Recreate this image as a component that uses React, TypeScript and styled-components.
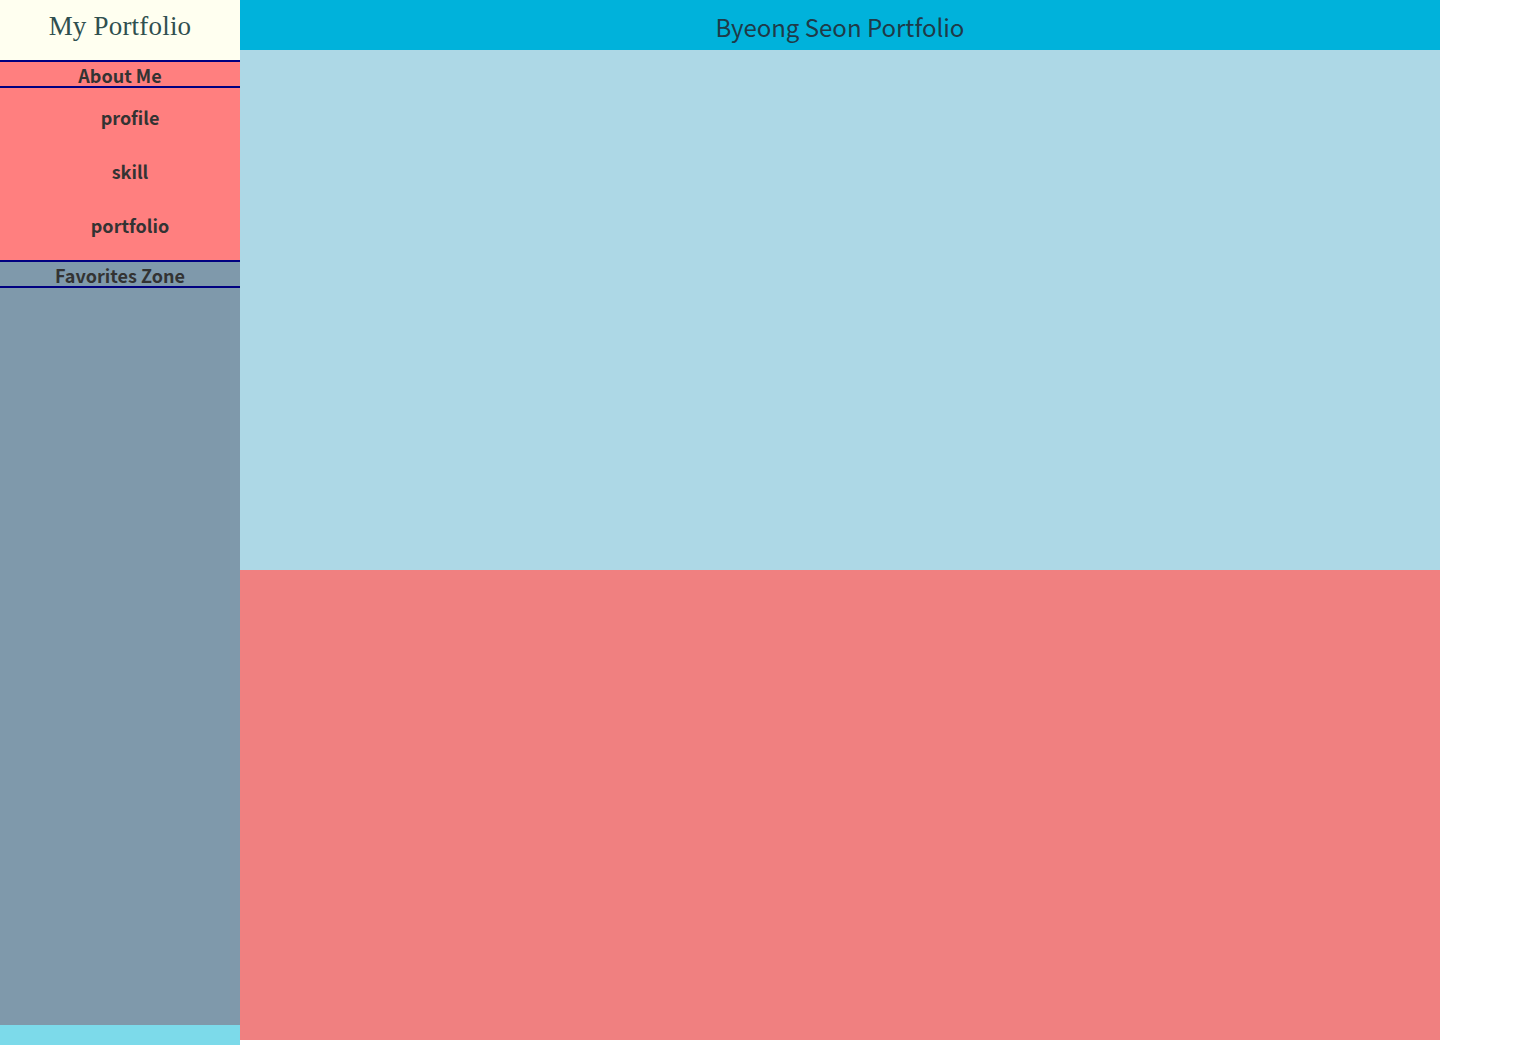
import React from 'react';
import styled, { createGlobalStyle } from 'styled-components';

const GlobalStyle = createGlobalStyle`
    html, body {
        margin: 0;
        padding: 0;
        background: #ffffff;
    }
    body {
        font-family: "Noto Sans CJK KR", "Noto Sans", sans-serif;
        color: #333333;
    }
`;

const Page = styled.div`
    display: flex;
    width: 1440px;
`;

const SideBar = styled.aside`
    width: 240px;
    flex-shrink: 0;
    display: flex;
    flex-direction: column;
`;

const Logo = styled.div`
    height: 60px;
    background-color: #fffff0;
    color: #2f4f4f;
    font-family: "Liberation Serif", "DejaVu Serif", serif;
    font-size: 27px;
    letter-spacing: 0.2px;
    display: flex;
    align-items: center;
    justify-content: center;
    padding-bottom: 7px;
    box-sizing: border-box;
`;

const SectionTitle = styled.h3<{ $bg: string }>`
    margin: 0;
    height: 28px;
    box-sizing: border-box;
    border-top: 2px solid #000080;
    border-bottom: 2px solid #000080;
    background-color: ${p => p.$bg};
    font-size: 18px;
    font-weight: bold;
    line-height: 26px;
    text-align: center;
    color: #333333;
`;

const MenuList = styled.ul`
    list-style: none;
    margin: 0;
    padding: 2px 0 8px 20px;
    background-color: #ff7f7f;
`;

const MenuItem = styled.li`
    height: 54px;
    line-height: 54px;
    text-align: center;
    font-size: 18px;
    font-weight: bold;
    color: #333333;
`;

const FavoriteZone = styled.div`
    height: 737px;
    background-color: #7f99ab;
`;

const SideFooter = styled.div`
    height: 40px;
    background-color: #7cdaea;
`;

const Main = styled.main`
    flex: 1;
    display: flex;
    flex-direction: column;
`;

const Header = styled.header`
    height: 50px;
    background-color: #00b2db;
    display: flex;
    align-items: center;
    justify-content: center;
    font-size: 24px;
    color: #1f3a48;
    padding-top: 3px;
    box-sizing: border-box;
`;

const Section = styled.section<{ $bg: string; $h: number }>`
    height: ${p => p.$h}px;
    background-color: ${p => p.$bg};
`;

const menus = ['profile', 'skill', 'portfolio'];

const App: React.FC = () => {
    return (
        <>
            <GlobalStyle />
            <Page>
                <SideBar>
                    <Logo>My Portfolio</Logo>
                    <SectionTitle $bg="#ff7f7f">About Me</SectionTitle>
                    <MenuList>
                        {menus.map(m => (
                            <MenuItem key={m}>{m}</MenuItem>
                        ))}
                    </MenuList>
                    <SectionTitle $bg="#7f99ab">Favorites Zone</SectionTitle>
                    <FavoriteZone />
                    <SideFooter />
                </SideBar>
                <Main>
                    <Header>Byeong Seon Portfolio</Header>
                    <Section $bg="#add8e6" $h={520} />
                    <Section $bg="#f08080" $h={470} />
                </Main>
            </Page>
        </>
    );
};

export default App;
